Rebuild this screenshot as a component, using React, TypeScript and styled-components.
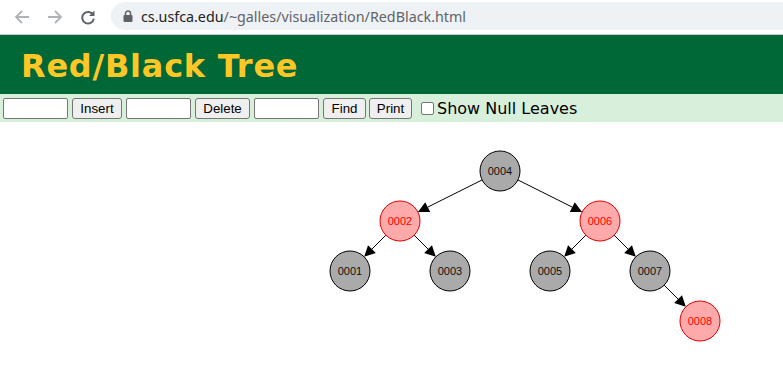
import React from "react";
import styled, { createGlobalStyle } from "styled-components";

const GlobalStyle = createGlobalStyle`
  html, body {
    margin: 0;
    padding: 0;
    background: #fff;
  }
  body {
    font-family: "Liberation Sans", Arial, sans-serif;
    overflow: hidden;
  }
`;

const ChromeBar = styled.div`
  height: 34px;
  display: flex;
  align-items: center;
  background: #fff;
  border-bottom: 1px solid #c8c8c8;
  box-sizing: content-box;
`;

const NavButton = styled.div`
  width: 32px;
  height: 28px;
  display: flex;
  align-items: center;
  justify-content: center;
  color: ${({ color }) => color || "#b0b3b6"};
`;

const NavGroup = styled.div`
  display: flex;
  align-items: center;
  gap: 1px;
  padding-left: 6px;
  margin-right: 7px;
`;

const Omnibox = styled.div`
  flex: 1;
  height: 28px;
  margin-top: -2px;
  background: #eff2f4;
  border-radius: 14px 0 0 14px;
  display: flex;
  align-items: center;
  padding-left: 12px;
  gap: 8px;
`;

const Url = styled.span`
  font-family: "Noto Sans", "Liberation Sans", sans-serif;
  font-size: 14.3px;
  color: #5f6368;
`;

const Host = styled.span`
  color: #202124;
`;

const Header = styled.div`
  height: 59px;
  background: #006837;
  display: flex;
  align-items: center;
  padding-left: 21px;
`;

const Title = styled.h1`
  margin: 0;
  margin-top: 2px;
  font-family: Verdana, "DejaVu Sans", sans-serif;
  font-weight: bold;
  font-size: 32px;
  letter-spacing: 0.75px;
  color: #ffc726;
`;

const Toolbar = styled.div`
  height: 28px;
  background: #d8efdc;
  display: flex;
  align-items: center;
  padding-left: 3px;
  gap: 4px;
`;

const TextField = styled.input`
  width: 65px;
  height: 21px;
  box-sizing: border-box;
  border: 1px solid #767676;
  border-radius: 2px;
  background: #fff;
  margin: 0;
  padding: 0;
`;

const Button = styled.button<{ $w: number; $tight?: boolean }>`
  width: ${({ $w }) => $w}px;
  height: 21px;
  box-sizing: border-box;
  border: 1px solid #767676;
  border-radius: 3px;
  background: #efefef;
  font-family: "Liberation Sans", Arial, sans-serif;
  font-size: 13.3px;
  color: #000;
  padding: 0;
  margin: 0 ${({ $tight }) => ($tight ? -1 : 0)}px 0 0;
`;

const CheckLabel = styled.label`
  display: flex;
  align-items: center;
  margin-left: 5px;
  font-family: Verdana, "DejaVu Sans", sans-serif;
  font-size: 16px;
  color: #000;
`;

const Check = styled.span`
  width: 11px;
  height: 11px;
  border: 1px solid #767676;
  border-radius: 2px;
  background: #fff;
  margin-right: 3px;
  margin-top: 1px;
`;

const Canvas = styled.div`
  height: 267px;
`;

type Node = { id: string; x: number; y: number; red: boolean };

const nodes: Node[] = [
  { id: "0004", x: 500, y: 49, red: false },
  { id: "0002", x: 400, y: 99, red: true },
  { id: "0006", x: 600, y: 99, red: true },
  { id: "0001", x: 350, y: 149, red: false },
  { id: "0003", x: 450, y: 149, red: false },
  { id: "0005", x: 550, y: 149, red: false },
  { id: "0007", x: 650, y: 149, red: false },
  { id: "0008", x: 700, y: 199, red: true },
];

const edges: [string, string][] = [
  ["0004", "0002"],
  ["0004", "0006"],
  ["0002", "0001"],
  ["0002", "0003"],
  ["0006", "0005"],
  ["0006", "0007"],
  ["0007", "0008"],
];

const R = 20;

const Edge = ({ from, to }: { from: Node; to: Node }) => {
  const dx = to.x - from.x;
  const dy = to.y - from.y;
  const len = Math.hypot(dx, dy);
  const ux = dx / len;
  const uy = dy / len;
  const sx = from.x + ux * R;
  const sy = from.y + uy * R;
  const ex = to.x - ux * R;
  const ey = to.y - uy * R;
  const bx = ex - ux * 11;
  const by = ey - uy * 11;
  const px = -uy * 5.5;
  const py = ux * 5.5;
  return (
    <g>
      <line x1={sx} y1={sy} x2={bx} y2={by} stroke="#000" strokeWidth={1} />
      <polygon
        points={`${ex},${ey} ${bx + px},${by + py} ${bx - px},${by - py}`}
        fill="#000"
      />
    </g>
  );
};

const Tree = () => {
  const byId = Object.fromEntries(nodes.map((n) => [n.id, n]));
  return (
    <svg width="783" height="267" style={{ display: "block" }}>
      {edges.map(([a, b]) => (
        <Edge key={a + b} from={byId[a]} to={byId[b]} />
      ))}
      {nodes.map((n) => (
        <g key={n.id}>
          <circle
            cx={n.x}
            cy={n.y}
            r={R}
            fill={n.red ? "#ffaaaa" : "#aaaaaa"}
            stroke={n.red ? "#dd0000" : "#000"}
            strokeWidth={1}
          />
          <text
            x={n.x}
            y={n.y + 4}
            textAnchor="middle"
            fontFamily="'Liberation Sans', Arial, sans-serif"
            fontSize="11"
            fill={n.red ? "#ff0000" : "#111"}
          >
            {n.id}
          </text>
        </g>
      ))}
    </svg>
  );
};

export default function App() {
  return (
    <>
      <GlobalStyle />
      <ChromeBar>
        <NavGroup>
          <NavButton>
            <svg width="16" height="16" viewBox="0 0 16 16">
              <path d="M15 8H2.5M8 2L2 8l6 6" fill="none" stroke="currentColor" strokeWidth="1.8" />
            </svg>
          </NavButton>
          <NavButton>
            <svg width="16" height="16" viewBox="0 0 16 16">
              <path d="M1 8h12.5M8 2l6 6-6 6" fill="none" stroke="currentColor" strokeWidth="1.8" />
            </svg>
          </NavButton>
          <NavButton color="#5f6368">
            <svg width="16" height="16" viewBox="0 0 16 16">
              <path d="M13.3 6.2A5.8 5.8 0 1 0 13.8 9.6" fill="none" stroke="currentColor" strokeWidth="2" />
              <path d="M14.5 1.5v5.5H9z" fill="currentColor" />
            </svg>
          </NavButton>
        </NavGroup>
        <Omnibox>
          <svg width="10" height="12" viewBox="0 0 10 12">
            <path d="M2.5 5V3.5a2.5 2.5 0 0 1 5 0V5" fill="none" stroke="#5f6368" strokeWidth="1.5" />
            <rect x="0.5" y="5" width="9" height="7" rx="1" fill="#5f6368" />
          </svg>
          <Url>
            <Host>cs.usfca.edu</Host>/~galles/visualization/RedBlack.html
          </Url>
        </Omnibox>
      </ChromeBar>
      <Header>
        <Title>Red/Black Tree</Title>
      </Header>
      <Toolbar>
        <TextField />
        <Button $w={50}>Insert</Button>
        <TextField />
        <Button $w={55}>Delete</Button>
        <TextField />
        <Button $w={43} $tight>Find</Button>
        <Button $w={43}>Print</Button>
        <CheckLabel>
          <Check />
          Show Null Leaves
        </CheckLabel>
      </Toolbar>
      <Canvas>
        <Tree />
      </Canvas>
    </>
  );
}
